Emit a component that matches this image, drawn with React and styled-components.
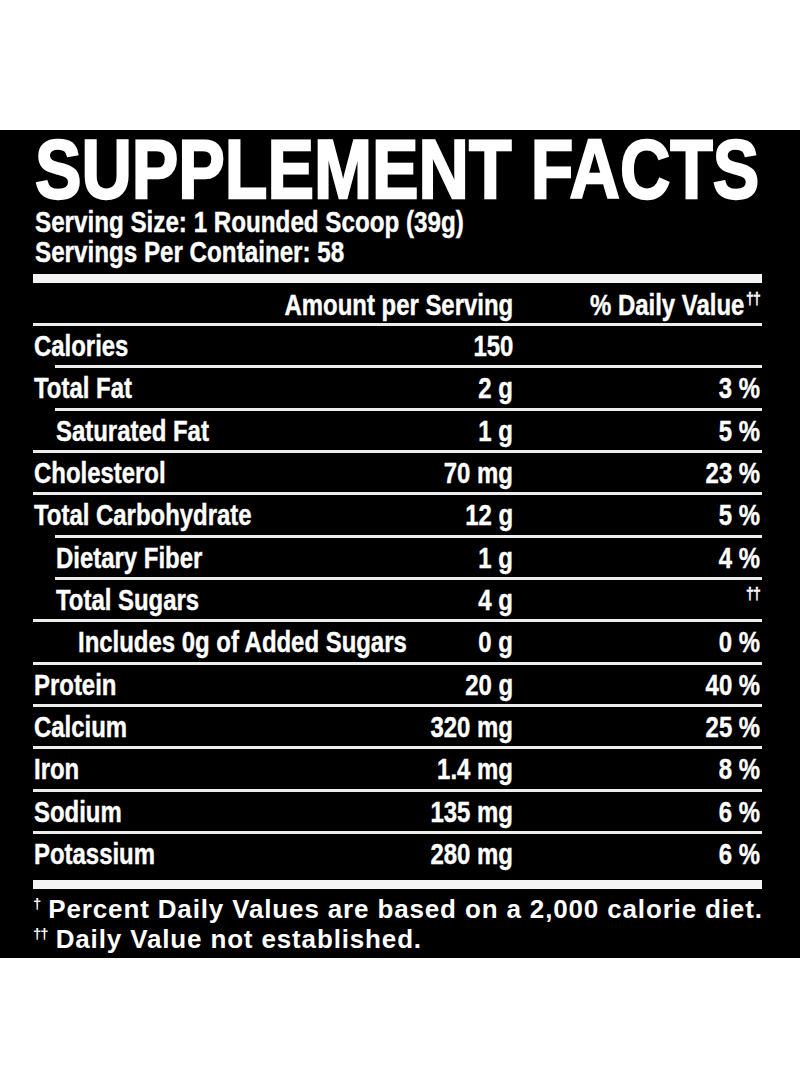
import React from "react";
import styled, { createGlobalStyle } from "styled-components";

const Global = createGlobalStyle`
  html, body { margin: 0; padding: 0; background: #ffffff; }
  body { width: 800px; height: 1090px; overflow: hidden; }
`;

const SANS = `"Liberation Sans", Arial, Helvetica, sans-serif`;

const Panel = styled.section`
  display: flow-root;
  margin-top: 130px;
  background: #000;
  color: #fff;
  padding: 0 38px 4px 33px;
  font-family: ${SANS};
  font-weight: 700;
`;

/* condensed lettering: the label face is a bold condensed grotesque */
const Cond = styled.span`
  display: inline-block;
  white-space: nowrap;
  transform: scaleX(${(p) => p.$sx || 0.825});
  transform-origin: ${(p) => (p.$right ? "100% 50%" : "0 50%")};
  -webkit-text-stroke: ${(p) => p.$stroke ?? 0.4}px #fff;
`;

/* the title is set smaller and stretched upward so its box stays in the panel */
const TitleText = styled.span`
  display: inline-block;
  white-space: nowrap;
  transform: scale(0.996, 1.2);
  transform-origin: 0 50%;
  -webkit-text-stroke: 1.9px #fff;
`;

const Title = styled.h1`
  margin: -1px 0 0 2px;
  height: 78px;
  font-size: 70px;
  line-height: 80px;
  font-weight: 700;
  white-space: nowrap;
`;

const ServingLine = styled.div`
  margin-left: 2px;
  font-size: 29.5px;
  line-height: 30px;
  white-space: nowrap;
`;

const ThickRule = styled.div`
  height: 9px;
  background: #f4f4f4;
  margin-top: ${(p) => p.$top}px;
`;

const Rule = styled.div`
  height: 3px;
  background: #ececec;
  margin-left: ${(p) => p.$indent || 0}px;
`;

const Grid = styled.div`
  display: grid;
  grid-template-columns: minmax(0, 1fr) 240px 249px;
  font-size: 29px;
  white-space: nowrap;
  box-sizing: border-box;
`;

const HeaderRow = styled(Grid)`
  height: 40px;
  padding-top: 4px;
  line-height: 36px;
`;

const Row = styled(Grid)`
  height: 39.33px;
  padding-top: 2px;
  line-height: 37.33px;
`;

const Label = styled.span`
  padding-left: ${(p) => 1 + (p.$level || 0) * 22}px;
`;

const Amount = styled.span`
  display: flex;
  justify-content: flex-end;
`;

const Daily = styled.span`
  display: flex;
  justify-content: flex-end;
  padding-right: 2px;
`;

const Sup = styled.span`
  font-size: 17px;
  line-height: 0;
  position: relative;
  top: -11px;
  margin-left: 2px;
  letter-spacing: -1px;
`;

const Footer = styled.div`
  margin-top: 5px;
  font-size: 26px;
  line-height: 30px;
  letter-spacing: 0.85px;
  white-space: nowrap;
`;

const FootSup = styled.span`
  font-size: 15px;
  line-height: 0;
  position: relative;
  top: -9px;
  margin-right: 8px;
  letter-spacing: -1px;
`;

const rows = [
  { label: "Calories", amount: "150", dv: "", rule: 0 },
  { label: "Total Fat", amount: "2 g", dv: "3 %", rule: 22 },
  { label: "Saturated Fat", amount: "1 g", dv: "5 %", level: 1, rule: 22 },
  { label: "Cholesterol", amount: "70 mg", dv: "23 %", rule: 0 },
  { label: "Total Carbohydrate", amount: "12 g", dv: "5 %", rule: 0 },
  { label: "Dietary Fiber", amount: "1 g", dv: "4 %", level: 1, rule: 22 },
  { label: "Total Sugars", amount: "4 g", dv: "††", level: 1, rule: 22 },
  { label: "Includes 0g of Added Sugars", amount: "0 g", dv: "0 %", level: 2, rule: 0 },
  { label: "Protein", amount: "20 g", dv: "40 %", rule: 0 },
  { label: "Calcium", amount: "320 mg", dv: "25 %", rule: 0 },
  { label: "Iron", amount: "1.4 mg", dv: "8 %", rule: 0 },
  { label: "Sodium", amount: "135 mg", dv: "6 %", rule: 0 },
  { label: "Potassium", amount: "280 mg", dv: "6 %", rule: 0 },
];

export default function App() {
  return (
    <>
      <Global />
      <Panel>
        <Title>
          <TitleText>SUPPLEMENT FACTS</TitleText>
        </Title>
        <div>
          <ServingLine>
            <Cond $sx={0.82}>Serving Size: 1 Rounded Scoop (39g)</Cond>
          </ServingLine>
          <ServingLine>
            <Cond $sx={0.82}>Servings Per Container: 58</Cond>
          </ServingLine>
        </div>
        <ThickRule $top={7} />
        <HeaderRow>
          <span />
          <Amount>
            <Cond $right>Amount per Serving</Cond>
          </Amount>
          <Daily>
            <Cond $right>
              % Daily Value<Sup>††</Sup>
            </Cond>
          </Daily>
        </HeaderRow>
        {rows.map((r) => (
          <React.Fragment key={r.label}>
            <Rule $indent={r.rule} />
            <Row>
              <Label $level={r.level}>
                <Cond>{r.label}</Cond>
              </Label>
              <Amount>
                <Cond $right>{r.amount}</Cond>
              </Amount>
              <Daily>
                <Cond $right>{r.dv === "††" ? <Sup>††</Sup> : r.dv}</Cond>
              </Daily>
            </Row>
          </React.Fragment>
        ))}
        <ThickRule $top={6.7} />
        <Footer>
          <div>
            <FootSup>†</FootSup>Percent Daily Values are based on a 2,000 calorie diet.
          </div>
          <div>
            <FootSup>††</FootSup>Daily Value not established.
          </div>
        </Footer>
      </Panel>
    </>
  );
}
